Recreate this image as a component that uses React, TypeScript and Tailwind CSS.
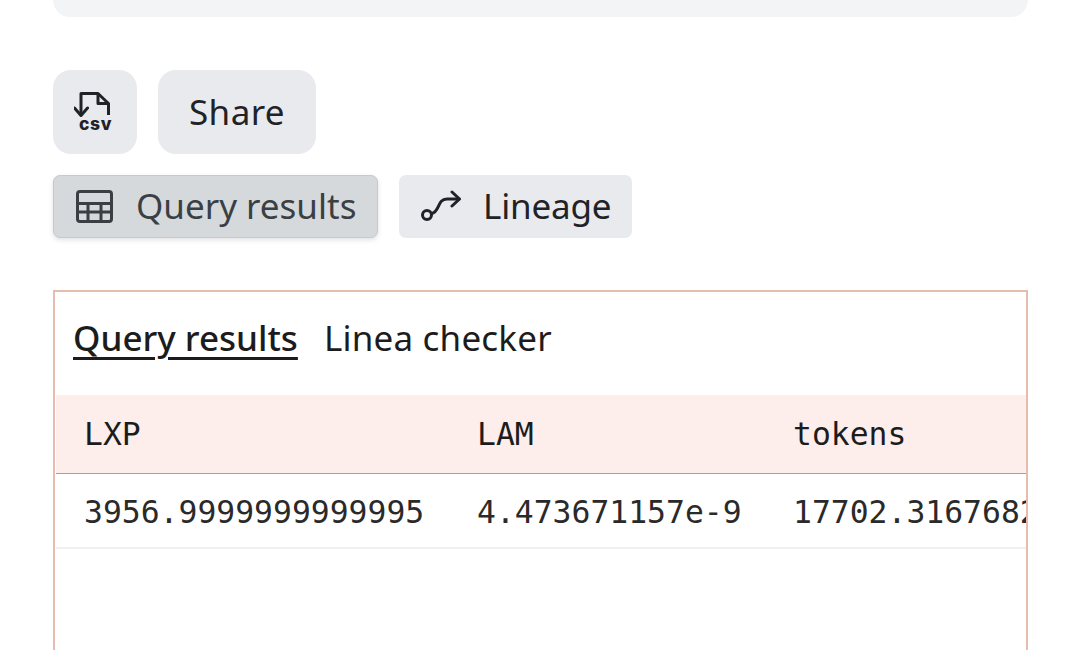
import React from 'react';

const sans = { fontFamily: '"Noto Sans", sans-serif' };

const CsvIcon = () => (
  <svg width="40" height="42" viewBox="0 0 40 42" fill="none" stroke="#1f2328" strokeWidth="3" className="-ml-[2px]">
    <path d="M7 24.5V2.5H24L34.5 12.5V24" strokeLinejoin="round" />
    <path d="M24 2.5V12.5H34.5" strokeLinejoin="round" />
    <path d="M0.5 17L7 24.5L13.5 17" strokeLinecap="round" strokeLinejoin="round" />
    <text x="5" y="39" fill="#1f2328" stroke="none" fontSize="17.5" fontWeight="800" letterSpacing="0.6" fontFamily="Inter, sans-serif">csv</text>
  </svg>
);

const TableIcon = () => (
  <svg width="38" height="33" viewBox="0 0 38 33" fill="none" stroke="#3a3f44" strokeWidth="3">
    <rect x="1.5" y="1.5" width="34" height="30" rx="2.5" />
    <path d="M1.5 13.5H35.5M1.5 22H35.5M12 13.5V31.5M25 13.5V31.5" />
  </svg>
);

const LineageIcon = () => (
  <svg width="42" height="34" viewBox="0 0 42 34" fill="none" stroke="#1f2328" strokeWidth="3" strokeLinecap="round" strokeLinejoin="round">
    <circle cx="7" cy="25" r="4.5" />
    <path d="M11.5 23.5C20 22 17 9 27 9H39" />
    <path d="M32 2L39.5 9L32 16" />
  </svg>
);

export default function App() {
  return (
    <div className="h-[650px] w-[1077px] overflow-hidden bg-white text-[#1f2328]" style={sans}>
      <div className="mx-[53px] w-[975px]">
        <div className="h-[17px] rounded-b-[18px] bg-[#f3f4f6]" />

        <div className="mt-[53px] flex gap-[21px]">
          <button className="flex h-[84px] w-[84px] items-center justify-center rounded-[18px] bg-[#e9eaee]">
            <CsvIcon />
          </button>
          <button className="h-[84px] w-[158px] rounded-[18px] bg-[#e9eaee] text-[35px] tracking-[0.4px]">Share</button>
        </div>

        <div className="mt-[21px] flex gap-[21px]">
          <button className="flex h-[63px] w-[325px] items-center gap-[22px] rounded-[7px] border border-[#c5cacd] bg-[#d5d9dc] pl-[22px] text-[35px] text-[#3a3f44] shadow-[0_2px_5px_rgba(0,0,0,0.12)]">
            <TableIcon />
            <span>Query results</span>
          </button>
          <button className="flex h-[63px] w-[233px] items-center gap-[21px] rounded-[7px] bg-[#e9eaee] pl-[21px] text-[35px] tracking-[-0.2px]">
            <LineageIcon />
            <span>Lineage</span>
          </button>
        </div>

        <div className="mt-[52px] h-[400px] overflow-hidden border-2 border-[#e6bcae] pl-px">
          <div className="flex h-[103px] items-start gap-[26px] pl-[17px] pt-[21px] text-[35px] leading-[50px] text-[#1c1c1c]">
            <span className="font-medium underline decoration-[3px] underline-offset-[6px]">Query results</span>
            <span className="tracking-[0.2px]">Linea checker</span>
          </div>

          <div className="flex h-[79px] w-[1100px] items-center border-b border-[#a3a3a3] bg-[#fdeeec] pt-px font-['DejaVu_Sans_Mono',monospace] text-[31.4px] text-[#1c1c1c]">
            <div className="w-[393px] shrink-0 pl-[28px]">LXP</div>
            <div className="w-[316px] shrink-0 pl-[28px]">LAM</div>
            <div className="shrink-0 pl-[28px]">tokens</div>
          </div>

          <div className="flex h-[75px] w-[1100px] items-center border-b-2 border-[#f1efee] pt-[5px] font-['DejaVu_Sans_Mono',monospace] text-[31.4px] text-[#2a2a2a]">
            <div className="w-[393px] shrink-0 pl-[28px]">3956.9999999999995</div>
            <div className="w-[316px] shrink-0 pl-[28px]">4.473671157e-9</div>
            <div className="shrink-0 pl-[28px]">17702.3167682</div>
          </div>
        </div>
      </div>
    </div>
  );
}
